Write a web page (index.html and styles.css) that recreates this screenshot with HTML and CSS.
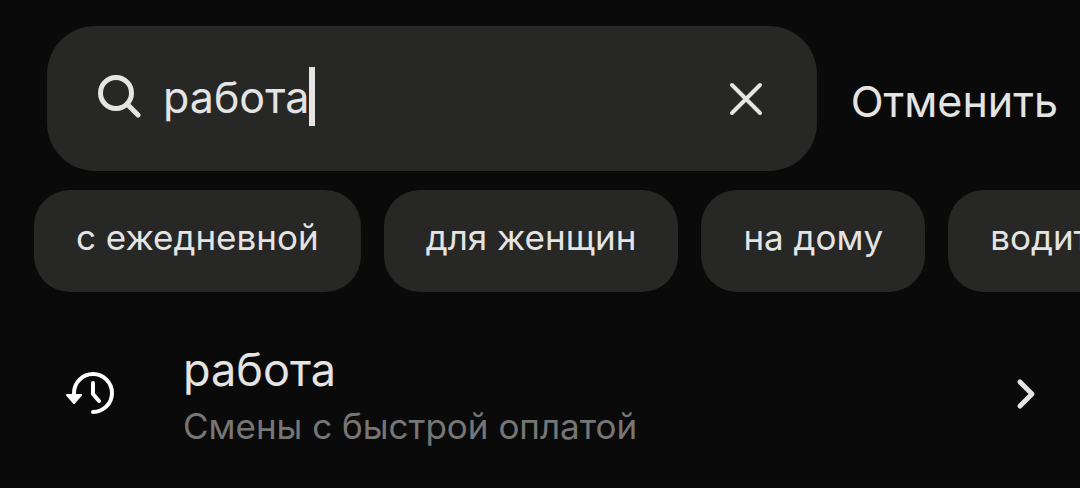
FILE: index.html
```html
<!DOCTYPE html>
<html lang="ru">
<head>
  <meta charset="UTF-8" />
  <meta name="viewport" content="width=device-width, initial-scale=1.0" />
  <title>Поиск</title>
  <link rel="stylesheet" href="styles.css">
</head>
<body>
  <form class="search" role="search">
    <div class="search-box">
      <svg class="icon-search" viewBox="0 0 44 44" aria-hidden="true">
        <circle cx="19" cy="18" r="15.500" />
        <path d="M30 29L41 40" />
      </svg>
      <input type="text" class="search-input" id="query" value="работа" aria-label="Поиск" autocomplete="off" />
      <span class="caret"></span>
      <button type="button" class="clear" id="clear" aria-label="Очистить">
        <svg viewBox="0 0 34 34" aria-hidden="true">
          <path d="M3 3L31 31M31 3L3 31" />
        </svg>
      </button>
    </div>
    <button type="reset" class="cancel">Отменить</button>
  </form>

  <div class="chips">
    <button type="button" class="chip">с ежедневной</button>
    <button type="button" class="chip">для женщин</button>
    <button type="button" class="chip">на дому</button>
    <button type="button" class="chip">водителем</button>
  </div>

  <a href="#" class="result">
    <svg class="icon-history" viewBox="0 0 50 44" aria-hidden="true">
      <path class="line" d="M9 22V21A19 19 0 1 1 28 40" />
      <path class="arrow" d="M2 23H16L9 31Z" />
      <path class="line" d="M28 11V22L34 29" />
    </svg>
    <span class="result-text">
      <span class="result-title">работа</span>
      <span class="result-note">Смены с быстрой оплатой</span>
    </span>
    <svg class="icon-next" viewBox="0 0 20 32" aria-hidden="true">
      <path d="M4 4L16 16L4 28" />
    </svg>
  </a>

  <script>
    const query = document.getElementById('query');

    document.getElementById('clear').addEventListener('click', () => {
      query.value = '';
      query.focus();
    });
  </script>
</body>
</html>
```
FILE: styles.css
```css
* {
  box-sizing: border-box;
}
body {
  margin: 0;
  padding-top: 26px;
  background-color: #0a0a0a;
  color: #e4e4e4;
  font-family: Inter, "Noto Sans", sans-serif;
  overflow-x: hidden;
}
button, input {
  padding: 0;
  border: none;
  background: none;
  color: inherit;
  font-family: inherit;
}
button {
  cursor: pointer;
}
svg {
  display: block;
  flex: none;
  fill: none;
  stroke: currentColor;
  stroke-width: 5;
  stroke-linecap: round;
  stroke-linejoin: round;
}
.search {
  display: flex;
  align-items: center;
  gap: 34px;
  padding: 0 22px 0 47px;
}
.search-box {
  flex: 1;
  min-width: 0;
  display: flex;
  align-items: center;
  height: 145px;
  padding: 0 54px 4px 50px;
  border-radius: 48px;
  background-color: #272725;
}
.icon-search {
  width: 44px;
  height: 44px;
  margin-right: 22px;
}
.search-input {
  field-sizing: content;
  min-width: 0;
  height: 60px;
  font-size: 43px;
  outline: none;
  caret-color: transparent;
}
.caret {
  width: 6px;
  height: 59px;
  background-color: #e4e4e4;
}
.clear {
  margin-left: auto;
  padding-top: 4px;
}
.clear svg {
  width: 34px;
  height: 34px;
  stroke-width: 4;
}
.cancel {
  padding-top: 4px;
  font-size: 43px;
  line-height: 60px;
}
.chips {
  display: flex;
  gap: 23px;
  margin-top: 19px;
  padding-left: 34px;
  overflow: hidden;
}
.chip {
  flex: none;
  height: 102px;
  padding: 0 42px 8px;
  border-radius: 36px;
  background-color: #272725;
  font-size: 35px;
  white-space: nowrap;
}
.result {
  display: flex;
  align-items: center;
  margin-top: 50px;
  padding: 0 44px 0 65px;
  color: inherit;
  text-decoration: none;
}
.result svg {
  margin-bottom: 8px;
}
.icon-history {
  width: 50px;
  height: 44px;
  margin-right: 68px;
  stroke: #fff;
  stroke-width: 4;
}
.icon-history .arrow {
  fill: #fff;
  stroke-width: 2;
}
.result-text {
  flex: 1;
  min-width: 0;
}
.result-title, .result-note {
  display: block;
  line-height: 56px;
}
.result-title {
  font-size: 45px;
}
.result-note {
  color: #767676;
  font-size: 35px;
}
.icon-next {
  width: 20px;
  height: 32px;
}
```
